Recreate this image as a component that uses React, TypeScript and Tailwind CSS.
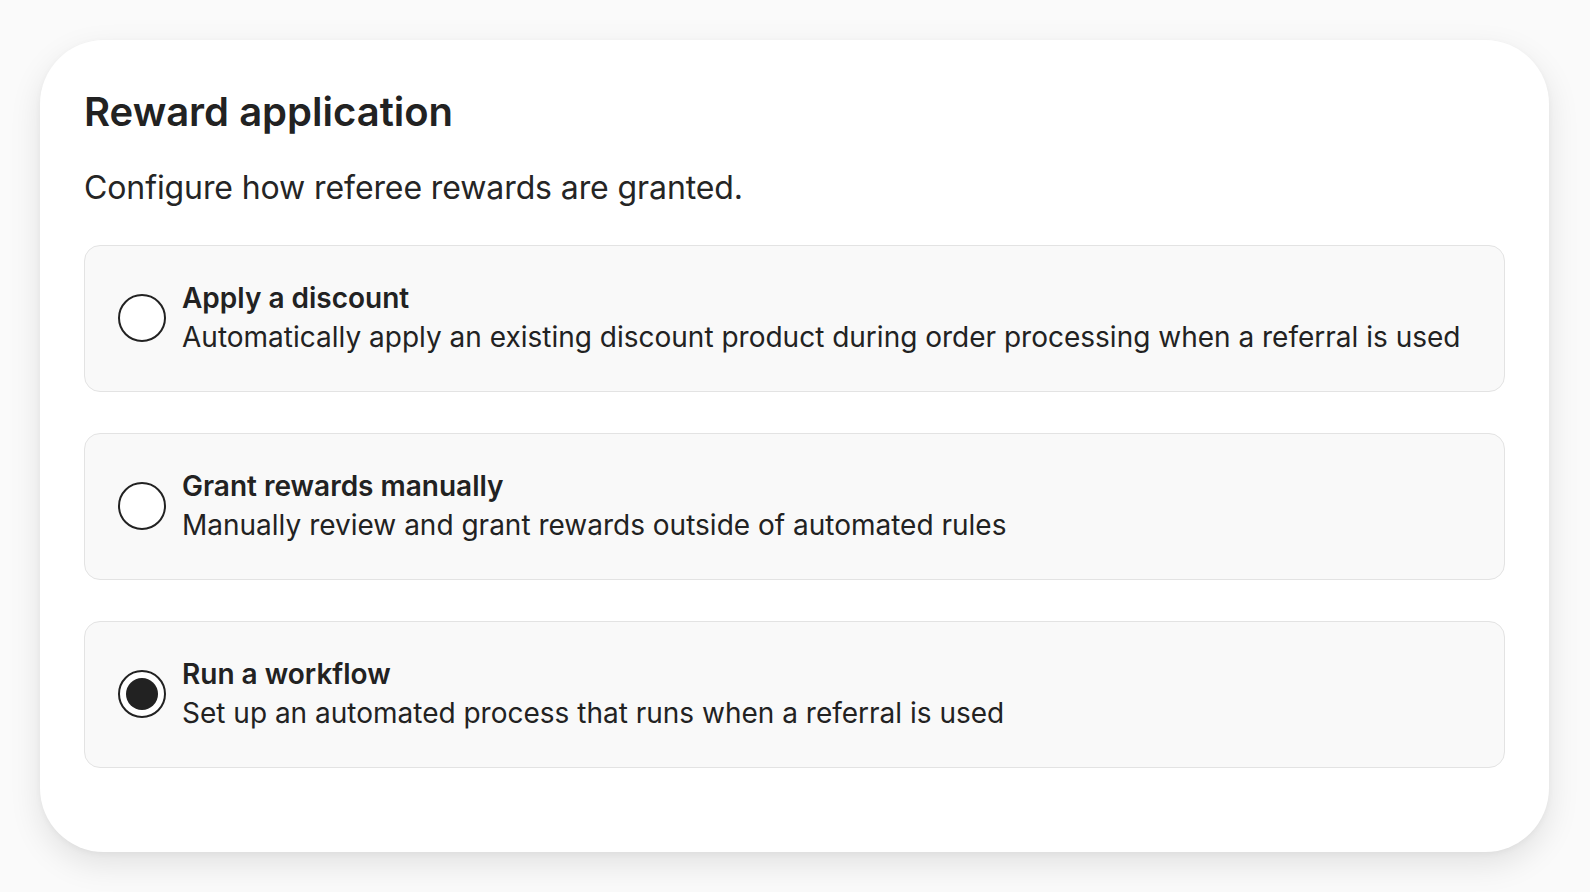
import { useState } from "react";

const OPTIONS = [
  { id: "discount", title: "Apply a discount", desc: "Automatically apply an existing discount product during order processing when a referral is used" },
  { id: "manual", title: "Grant rewards manually", desc: "Manually review and grant rewards outside of automated rules" },
  { id: "workflow", title: "Run a workflow", desc: "Set up an automated process that runs when a referral is used" },
];

export default function App() {
  const [selected, setSelected] = useState("workflow");

  return (
    <div className="min-h-screen bg-[#fafafa] pt-[40px] px-[40px] pr-[41px]" style={{ fontFamily: "Inter, 'Noto Sans', sans-serif" }}>
      <div className="bg-white rounded-[64px] shadow-[0_12px_32px_rgba(0,0,0,0.10),0_2px_6px_rgba(0,0,0,0.04)] px-[44px] pt-[48px] pb-[84px] text-[#222]">
        <h2 className="text-[40px] leading-[48px] font-semibold">Reward application</h2>
        <p className="mt-[31px] text-[32px] leading-[42px] tracking-[-0.1px] text-[#252525]">Configure how referee rewards are granted.</p>
        <div className="mt-[36px] flex flex-col gap-[41px]">
          {OPTIONS.map((o) => {
            const on = selected === o.id;
            return (
              <button key={o.id} onClick={() => setSelected(o.id)}
                className="flex items-center gap-[16px] text-left bg-[#f9f9f9] border border-[#e3e3e3] rounded-[16px] pl-[33px] pr-[33px] pt-[33px] pb-[34px]">
                <span className="shrink-0 w-[48px] h-[48px] rounded-full border-2 border-[#222] bg-white flex items-center justify-center">
                  {on && <span className="w-[32px] h-[32px] rounded-full bg-[#222]" />}
                </span>
                <span className="flex flex-col">
                  <span className="text-[28px] leading-[39px] font-semibold">{o.title}</span>
                  <span className="text-[28px] leading-[39px]">{o.desc}</span>
                </span>
              </button>
            );
          })}
        </div>
      </div>
    </div>
  );
}
